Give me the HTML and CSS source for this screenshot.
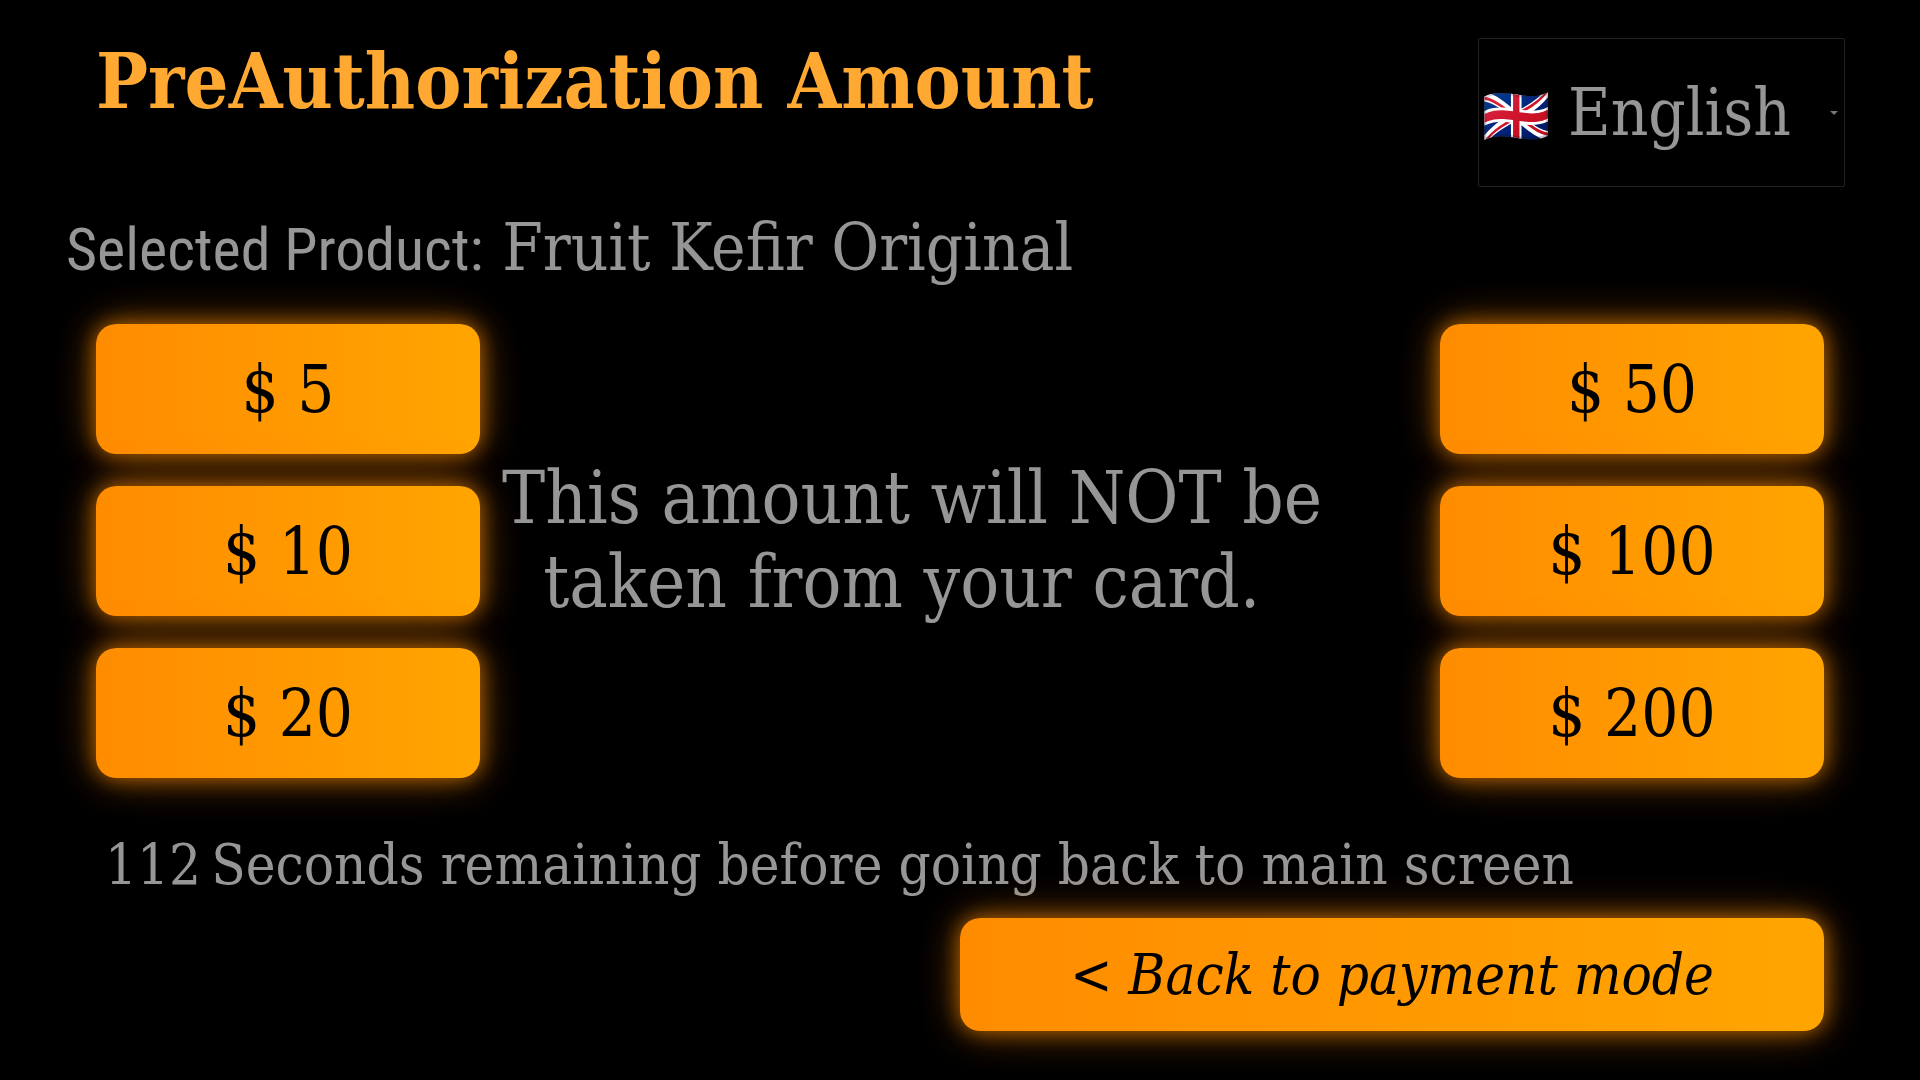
FILE: index.html
```html
<!DOCTYPE html>
<html lang="en">
<head>
<meta charset="utf-8">
<title>PreAuthorization Amount</title>
<link rel="stylesheet" href="styles.css">
</head>
<body>
<header class="header">
  <h1 class="title">PreAuthorization Amount</h1>
  <div class="language">
    <span class="language-flag" aria-hidden="true">🇬🇧</span>
    <select class="language-select" aria-label="Language">
      <option>English</option>
    </select>
    <svg class="language-arrow" width="8" height="4" viewBox="0 0 8 4" aria-hidden="true"><path d="M0 0h8L4 4z" fill="#777"/></svg>
  </div>
</header>
<p class="product"><span class="product-label">Selected Product:</span> Fruit Kefir Original</p>
<main class="amounts">
  <div class="column">
    <button class="button" type="button">$ 5</button>
    <button class="button" type="button">$ 10</button>
    <button class="button" type="button">$ 20</button>
  </div>
  <p class="notice">This amount will NOT be taken from your card.&nbsp;</p>
  <div class="column column-right">
    <button class="button" type="button">$ 50</button>
    <button class="button" type="button">$ 100</button>
    <button class="button" type="button">$ 200</button>
  </div>
</main>
<footer class="footer">
  <p class="countdown"><span>112</span><span>Seconds remaining before going back to main screen</span></p>
  <button class="button button-back" type="button">&lt; Back to payment mode</button>
</footer>
</body>
</html>
```

FILE: styles.css
```css
* {
  box-sizing: border-box;
}

body {
  margin: 0;
  background: #000;
  color: #969696;
  font-family: "DejaVu Serif Condensed", "DejaVu Serif", serif;
}

h1,
p {
  margin: 0;
}

.header {
  display: flex;
  justify-content: space-between;
  align-items: flex-start;
  padding: 36px 75px 0 5%;
}

.title {
  color: #ffa932;
  font-size: 77px;
  line-height: 90px;
  font-weight: bold;
}

.language {
  position: relative;
  display: flex;
  align-items: baseline;
  gap: 18px;
  width: 367px;
  margin-top: 2px;
  padding-left: 3px;
  border: 1px solid #222;
  border-radius: 2px;
  font-size: 65px;
}

.language-flag {
  font-size: 55px;
  line-height: 64px;
}

.language-select {
  flex: 1;
  height: 147px;
  padding: 0;
  border: 0;
  appearance: none;
  background: none;
  color: inherit;
  font: inherit;
}

.language-arrow {
  position: absolute;
  top: 72px;
  right: 6px;
  pointer-events: none;
}

.product {
  padding: 23px 66px 0;
  font-size: 65px;
  line-height: 76px;
}

.product-label {
  font-family: "Roboto Condensed", "Liberation Sans", sans-serif;
  font-size: 60px;
}

.amounts {
  display: grid;
  grid-template-columns: 20fr 45fr 5fr 20fr;
  padding: 36px 5% 0;
}

.column {
  display: flex;
  flex-direction: column;
  gap: 32px;
}

.column-right {
  grid-column: 4;
}

.button {
  height: 130px;
  border: 0;
  border-radius: 20px;
  background: linear-gradient(to right, #ff8c00, #ffa500);
  box-shadow: 0 0 20px rgba(255, 140, 0, 0.6), 0 0 40px rgba(255, 140, 0, 0.4), 0 0 60px rgba(255, 140, 0, 0.1);
  color: #000;
  font: inherit;
  font-size: 65px;
  cursor: pointer;
}

.notice {
  align-self: center;
  padding-bottom: 22px;
  font-size: 72px;
  line-height: 84px;
  text-align: center;
}

.footer {
  display: flex;
  flex-direction: column;
  padding: 54px 5% 48px;
}

.countdown {
  display: flex;
  gap: 10px;
  padding-left: 9px;
  font-size: 56px;
  line-height: 66px;
}

.button-back {
  align-self: flex-end;
  width: 50%;
  height: 113px;
  margin-top: 20px;
  font-size: 56px;
  font-style: italic;
}
```
